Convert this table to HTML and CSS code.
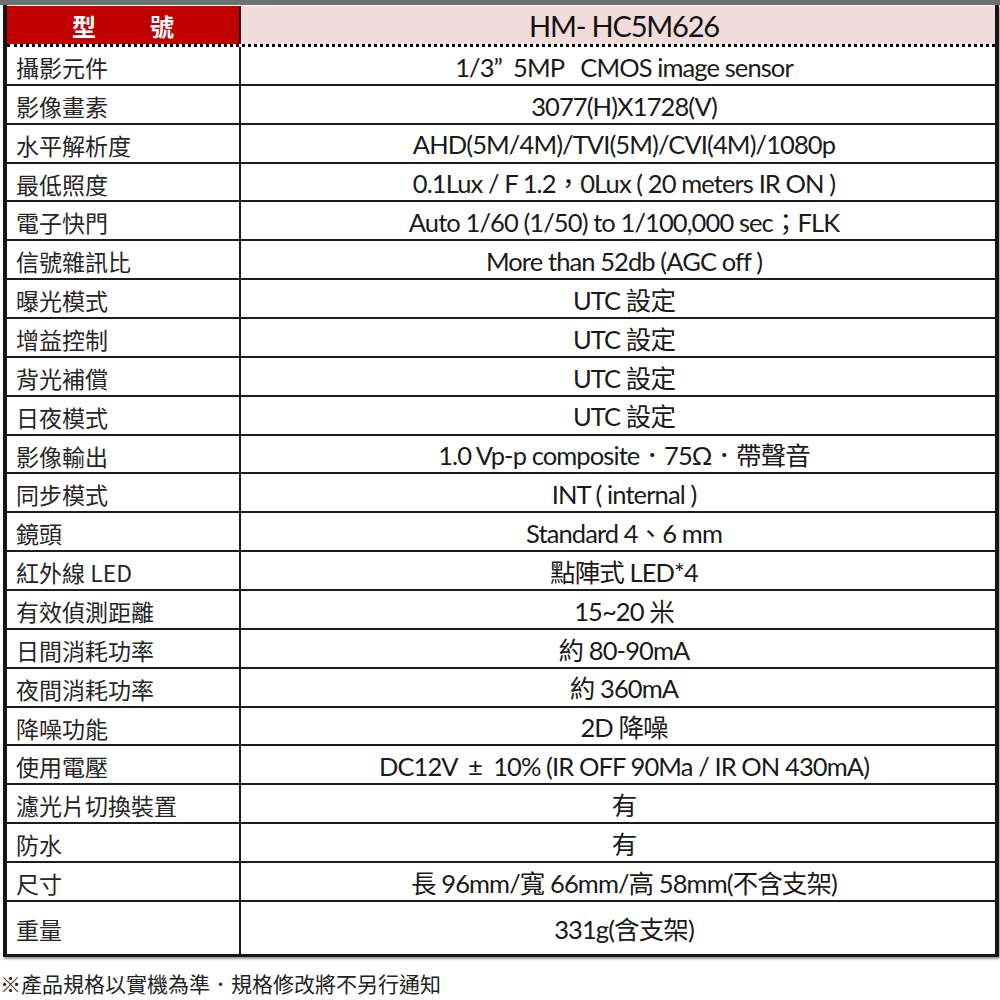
FILE: index.html
```html
<!DOCTYPE html>
<html lang="zh-Hant">
<head>
<meta charset="utf-8">
<title>HM-HC5M626 規格</title>
<link rel="stylesheet" href="styles.css">
</head>
<body>
<div class="topbar"></div>
<div class="spec">
  <div class="row head">
    <div class="key">型<span class="gap"></span>號</div>
    <div class="val">HM- HC5M626</div>
  </div>
  <div class="row"><div class="key">攝影元件</div><div class="val">1/3”&nbsp; 5MP&nbsp;&nbsp; CMOS image sensor</div></div>
  <div class="row"><div class="key">影像畫素</div><div class="val">3077(H)X1728(V)</div></div>
  <div class="row"><div class="key">水平解析度</div><div class="val">AHD(5M/4M)/TVI(5M)/CVI(4M)/1080p</div></div>
  <div class="row"><div class="key">最低照度</div><div class="val">0.1Lux / F 1.2，0Lux ( 20 meters IR ON )</div></div>
  <div class="row"><div class="key">電子快門</div><div class="val">Auto 1/60 (1/50) to 1/100,000 sec；FLK</div></div>
  <div class="row"><div class="key">信號雜訊比</div><div class="val">More than 52db (AGC off )</div></div>
  <div class="row"><div class="key">曝光模式</div><div class="val">UTC 設定</div></div>
  <div class="row"><div class="key">增益控制</div><div class="val">UTC 設定</div></div>
  <div class="row"><div class="key">背光補償</div><div class="val">UTC 設定</div></div>
  <div class="row"><div class="key">日夜模式</div><div class="val">UTC 設定</div></div>
  <div class="row"><div class="key">影像輸出</div><div class="val">1.0 Vp-p composite．75Ω．帶聲音</div></div>
  <div class="row"><div class="key">同步模式</div><div class="val">INT ( internal )</div></div>
  <div class="row"><div class="key">鏡頭</div><div class="val">Standard 4、6 mm</div></div>
  <div class="row"><div class="key">紅外線 LED</div><div class="val">點陣式 LED*4</div></div>
  <div class="row"><div class="key">有效偵測距離</div><div class="val">15~20 米</div></div>
  <div class="row"><div class="key">日間消耗功率</div><div class="val">約 80-90mA</div></div>
  <div class="row"><div class="key">夜間消耗功率</div><div class="val">約 360mA</div></div>
  <div class="row"><div class="key">降噪功能</div><div class="val">2D 降噪</div></div>
  <div class="row"><div class="key">使用電壓</div><div class="val">DC12V&nbsp; ±&nbsp; 10% (IR OFF 90Ma / IR ON 430mA)</div></div>
  <div class="row"><div class="key">濾光片切換裝置</div><div class="val">有</div></div>
  <div class="row"><div class="key">防水</div><div class="val">有</div></div>
  <div class="row"><div class="key">尺寸</div><div class="val">長 96mm/寬 66mm/高 58mm(不含支架)</div></div>
  <div class="row last"><div class="key">重量</div><div class="val">331g(含支架)</div></div>
</div>
<p class="note">※產品規格以實機為準．規格修改將不另行通知</p>
</body>
</html>
```
FILE: styles.css
```css
html, body {
  margin: 0;
  padding: 0;
  background: #ffffff;
}
body {
  width: 1000px;
  height: 1000px;
  overflow: hidden;
  font-family: "Noto Sans CJK TC", sans-serif;
  color: #1e1e1e;
}
.topbar {
  height: 5px;
  background: #6f6f6f;
}
.spec {
  margin-left: 3px;
  width: 996px;
  box-sizing: border-box;
  border-left: 4px solid #151515;
  border-right: 4px solid #151515;
  border-bottom: 3px solid #151515;
  box-shadow: 1px 2px 2px #9a9a9a;
}
.row {
  display: grid;
  grid-template-columns: 234px 1fr;
  height: 38.86px;
  box-sizing: border-box;
  border-bottom: 2px solid #1c1c1c;
}
.row.last {
  height: 52px;
  border-bottom: none;
}
.row.head {
  height: 42px;
  border-bottom: 3px dotted #000;
  padding-top: 1px;
}
.key {
  border-right: 2px solid #1c1c1c;
  padding-left: 9px;
  font-size: 23px;
  line-height: 1;
  display: flex;
  align-items: center;
  padding-top: 4px;
  white-space: nowrap;
  color: #262626;
}
.val {
  font-family: Lato, "Noto Sans CJK TC", sans-serif;
  font-size: 25.5px;
  line-height: 1;
  display: flex;
  align-items: center;
  justify-content: center;
  padding-top: 4px;
  padding-left: 12px;
  white-space: nowrap;
  letter-spacing: -0.9px;
  color: #1a1a1a;
}
.head .key {
  background: #c00000;
  color: #ffffff;
  justify-content: center;
  padding-left: 0;
  padding-top: 1px;
  font-size: 24px;
  font-weight: 700;
}
.head .key .gap {
  display: inline-block;
  width: 54px;
}
.head .val {
  background: #f2dcdb;
  font-size: 29px;
  letter-spacing: -1.2px;
  padding-top: 1px;
  color: #111;
}
.note {
  margin: 12px 0 0 0;
  font-size: 21px;
  line-height: 28px;
  color: #222;
  white-space: nowrap;
}
```
